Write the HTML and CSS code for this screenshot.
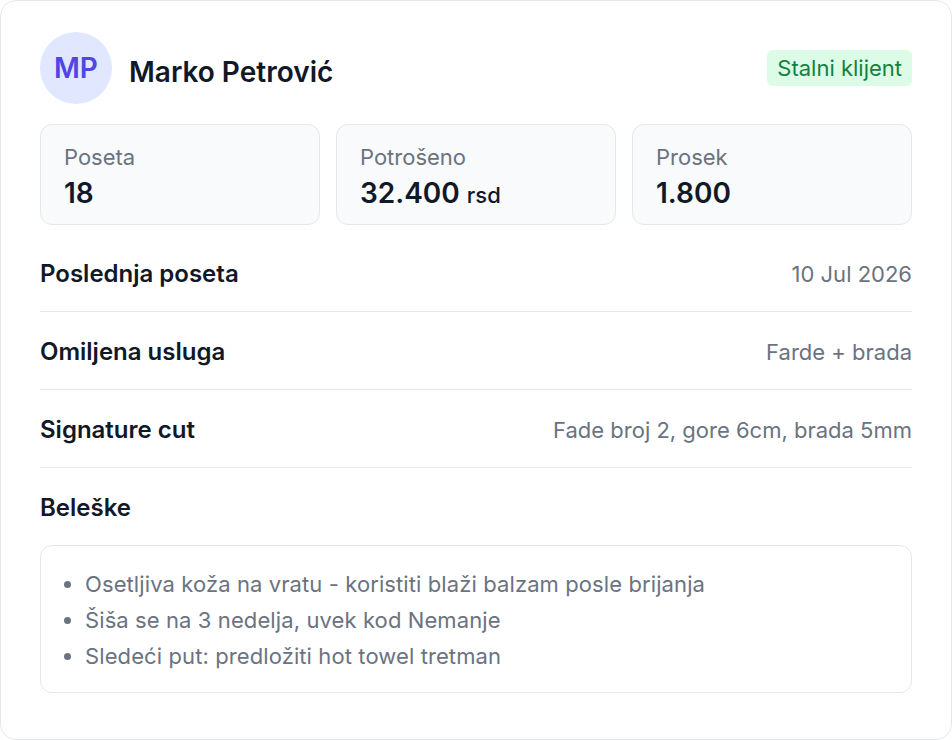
FILE: index.html
```html
<!DOCTYPE html>
<html lang="sr">
<head>
<meta charset="utf-8">
<title>Marko Petrović</title>
<link rel="stylesheet" href="styles.css">
</head>
<body>
<div class="card">
  <div class="header">
    <div class="who">
      <div class="avatar">MP</div>
      <div class="name">Marko Petrović</div>
    </div>
    <span class="badge">Stalni klijent</span>
  </div>
  <div class="stats">
    <div class="stat">
      <div class="stat-label">Poseta</div>
      <div class="stat-value">18</div>
    </div>
    <div class="stat">
      <div class="stat-label">Potrošeno</div>
      <div class="stat-value">32.400 <span class="unit">rsd</span></div>
    </div>
    <div class="stat">
      <div class="stat-label">Prosek</div>
      <div class="stat-value">1.800</div>
    </div>
  </div>
  <div class="rows">
    <div class="row">
      <div class="row-label">Poslednja poseta</div>
      <div class="row-value">10 Jul 2026</div>
    </div>
    <div class="row">
      <div class="row-label">Omiljena usluga</div>
      <div class="row-value">Farde + brada</div>
    </div>
    <div class="row">
      <div class="row-label">Signature cut</div>
      <div class="row-value">Fade broj 2, gore 6cm, brada 5mm</div>
    </div>
  </div>
  <div class="notes-title">Beleške</div>
  <div class="notes">
    <ul>
      <li>Osetljiva koža na vratu - koristiti blaži balzam posle brijanja</li>
      <li>Šiša se na 3 nedelja, uvek kod Nemanje</li>
      <li>Sledeći put: predložiti hot towel tretman</li>
    </ul>
  </div>
</div>
</body>
</html>
```

FILE: styles.css
```css
* { box-sizing: border-box; }
html, body { margin: 0; padding: 0; background: #ffffff; }
body {
  font-family: Inter, "Noto Sans", "Liberation Sans", sans-serif;
  color: #111827;
}
.card {
  width: 952px;
  height: 740px;
  border: 1px solid #e5e7eb;
  border-radius: 16px;
  padding: 31px 39px;
  background: #ffffff;
}
.header {
  display: flex;
  align-items: center;
  justify-content: space-between;
  height: 72px;
}
.who { display: flex; align-items: center; gap: 17px; }
.avatar {
  width: 72px;
  height: 72px;
  border-radius: 50%;
  background: #e0e7ff;
  color: #4f46e5;
  display: flex;
  align-items: center;
  justify-content: center;
  font-size: 28px;
  font-weight: 600;
}
.name { font-size: 28px; line-height: 34px; font-weight: 600; color: #111827; padding-top: 8px; }
.badge {
  background: #dcfce7;
  color: #15803d;
  font-size: 22px;
  line-height: 28px;
  padding: 4px 10px;
  border-radius: 6px;
}
.stats {
  margin-top: 20px;
  display: grid;
  grid-template-columns: repeat(3, 1fr);
  gap: 16px;
}
.stat {
  height: 101px;
  background: #f8fafc;
  border: 1px solid #e5e7eb;
  border-radius: 12px;
  padding: 20px 23px 0;
}
.stat-label { font-size: 22px; line-height: 24px; color: #6b7280; }
.stat-value { margin-top: 8px; font-size: 28px; line-height: 32px; font-weight: 600; color: #111827; }
.unit { font-size: 22px; font-weight: 500; }
.rows { margin-top: 9px; }
.row {
  display: flex;
  justify-content: space-between;
  align-items: center;
  padding: 26px 0 23px;
  border-bottom: 1px solid #e5e7eb;
  line-height: 28px;
}
.row-label { font-size: 24px; font-weight: 600; color: #111827; }
.row-value { font-size: 22px; color: #6b7280; }
.notes-title {
  padding-top: 26px;
  font-size: 24px;
  line-height: 28px;
  font-weight: 600;
}
.notes {
  margin-top: 23px;
  border: 1px solid #e5e7eb;
  border-radius: 12px;
  padding: 20px 24px 18px;
}
.notes ul { margin: 0; padding-left: 20px; }
.notes li { font-size: 22px; letter-spacing: 0.1px; line-height: 36px; color: #6b7280; }
```
